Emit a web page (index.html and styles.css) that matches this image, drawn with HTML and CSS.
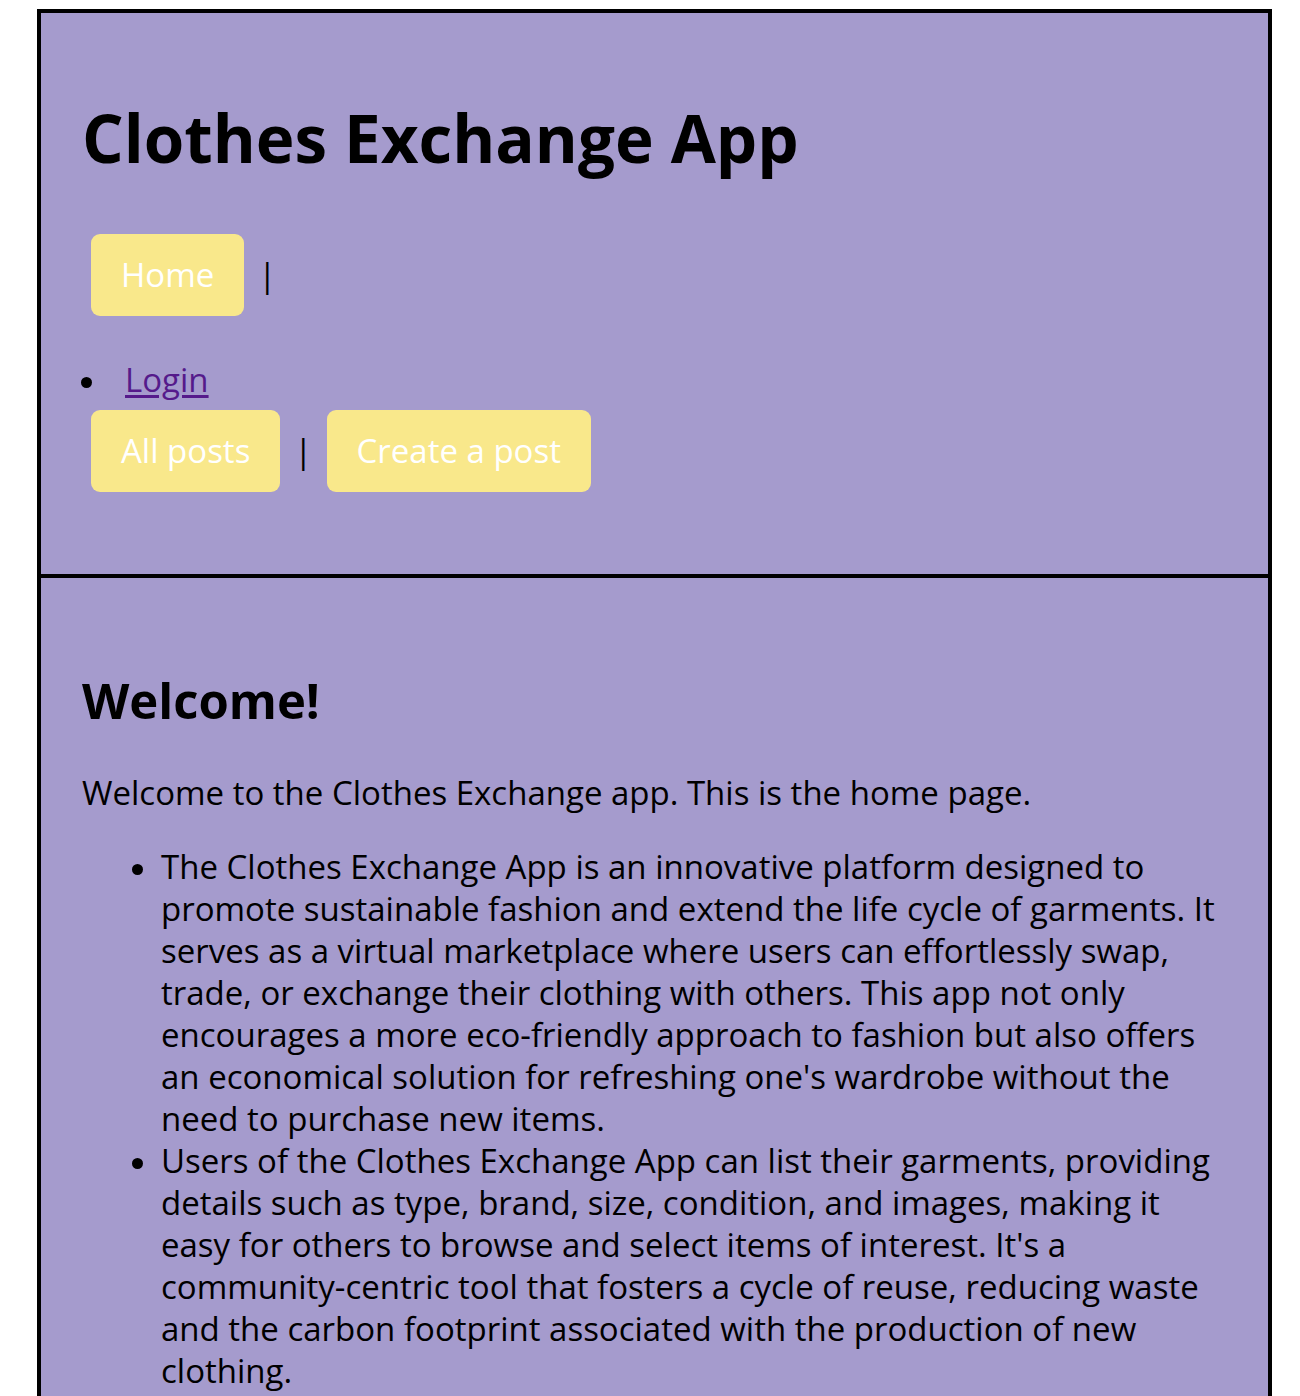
FILE: index.html
```html
<!DOCTYPE html>
<html lang="en">
<head>
<meta charset="utf-8">
<title>Clothes Exchange App</title>
<link rel="stylesheet" href="styles.css">
</head>
<body>
<div class="page">
  <header class="top">
    <h1 class="title">Clothes Exchange App</h1>
    <nav class="nav">
      <div class="nav-row">
        <a class="btn" href="#">Home</a>
        <span class="sep">|</span>
      </div>
      <ul class="auth">
        <li class="bullet-item"><a class="auth-link" href="#">Login</a></li>
      </ul>
      <div class="nav-row nav-row-last">
        <a class="btn" href="#">All posts</a>
        <span class="sep">|</span>
        <a class="btn" href="#">Create a post</a>
      </div>
    </nav>
  </header>
  <main class="content">
    <h2 class="welcome">Welcome!</h2>
    <p class="intro">Welcome to the Clothes Exchange app. This is the home page.</p>
    <ul class="about">
      <li class="bullet-item"><span class="item-text">The Clothes Exchange App is an innovative platform designed to promote sustainable fashion and extend the life cycle of garments. It serves as a virtual marketplace where users can effortlessly swap, trade, or exchange their clothing with others. This app not only encourages a more eco-friendly approach to fashion but also offers an economical solution for refreshing one's wardrobe without the need to purchase new items.</span></li>
      <li class="bullet-item"><span class="item-text">Users of the Clothes Exchange App can list their garments, providing details such as type, brand, size, condition, and images, making it easy for others to browse and select items of interest. It's a community-centric tool that fosters a cycle of reuse, reducing waste and the carbon footprint associated with the production of new clothing.</span></li>
    </ul>
  </main>
</div>
</body>
</html>
```
FILE: styles.css
```css
html, body {
  margin: 0;
  padding: 0;
  background: #ffffff;
}

body {
  font-family: "Open Sans", "Noto Sans", "DejaVu Sans", sans-serif;
  font-size: 33px;
  line-height: 42px;
  color: #000000;
}

.page {
  margin: 9px 28px 0 37px;
  border: 4px solid #000000;
  border-bottom: none;
  background: #a59bcd;
}

.top {
  padding: 85px 41px 82px 41px;
  border-bottom: 4px solid #000000;
}

.title {
  margin: 0 0 57px 0;
  font-size: 65.5px;
  line-height: 79px;
  font-weight: 700;
}

.nav {
  display: flex;
  flex-direction: column;
}

.nav-row {
  display: flex;
  align-items: center;
  gap: 14px;
  padding-left: 9px;
}

.btn {
  display: block;
  padding: 20px 30px;
  background: #f9e88b;
  color: #ffffff;
  text-decoration: none;
  border-radius: 9px;
  line-height: 42px;
}

.sep {
  color: #000000;
  line-height: 42px;
}

.auth {
  list-style: none;
  margin: 43px 0 9px 0;
  padding: 0;
}

.bullet-item {
  display: flex;
  align-items: flex-start;
}

.bullet-item::before {
  content: "";
  flex: none;
  width: 11px;
  height: 11px;
  border-radius: 50%;
  background: #000000;
  margin-top: 18px;
}

.auth .bullet-item::before {
  margin-left: -1px;
  margin-right: 33px;
}

.auth-link {
  color: #551a8b;
  text-decoration: underline;
  text-underline-offset: 3px;
}

.content {
  padding: 93px 41px 40px 41px;
}

.welcome {
  margin: 0 0 42px 0;
  font-size: 49px;
  line-height: 59px;
  font-weight: 700;
}

.intro {
  margin: 0 0 32px 0;
}

.about {
  list-style: none;
  margin: 0;
  padding: 0 0 0 50px;
}

.about .bullet-item::before {
  margin-right: 18px;
}

.item-text {
  display: block;
}
```
